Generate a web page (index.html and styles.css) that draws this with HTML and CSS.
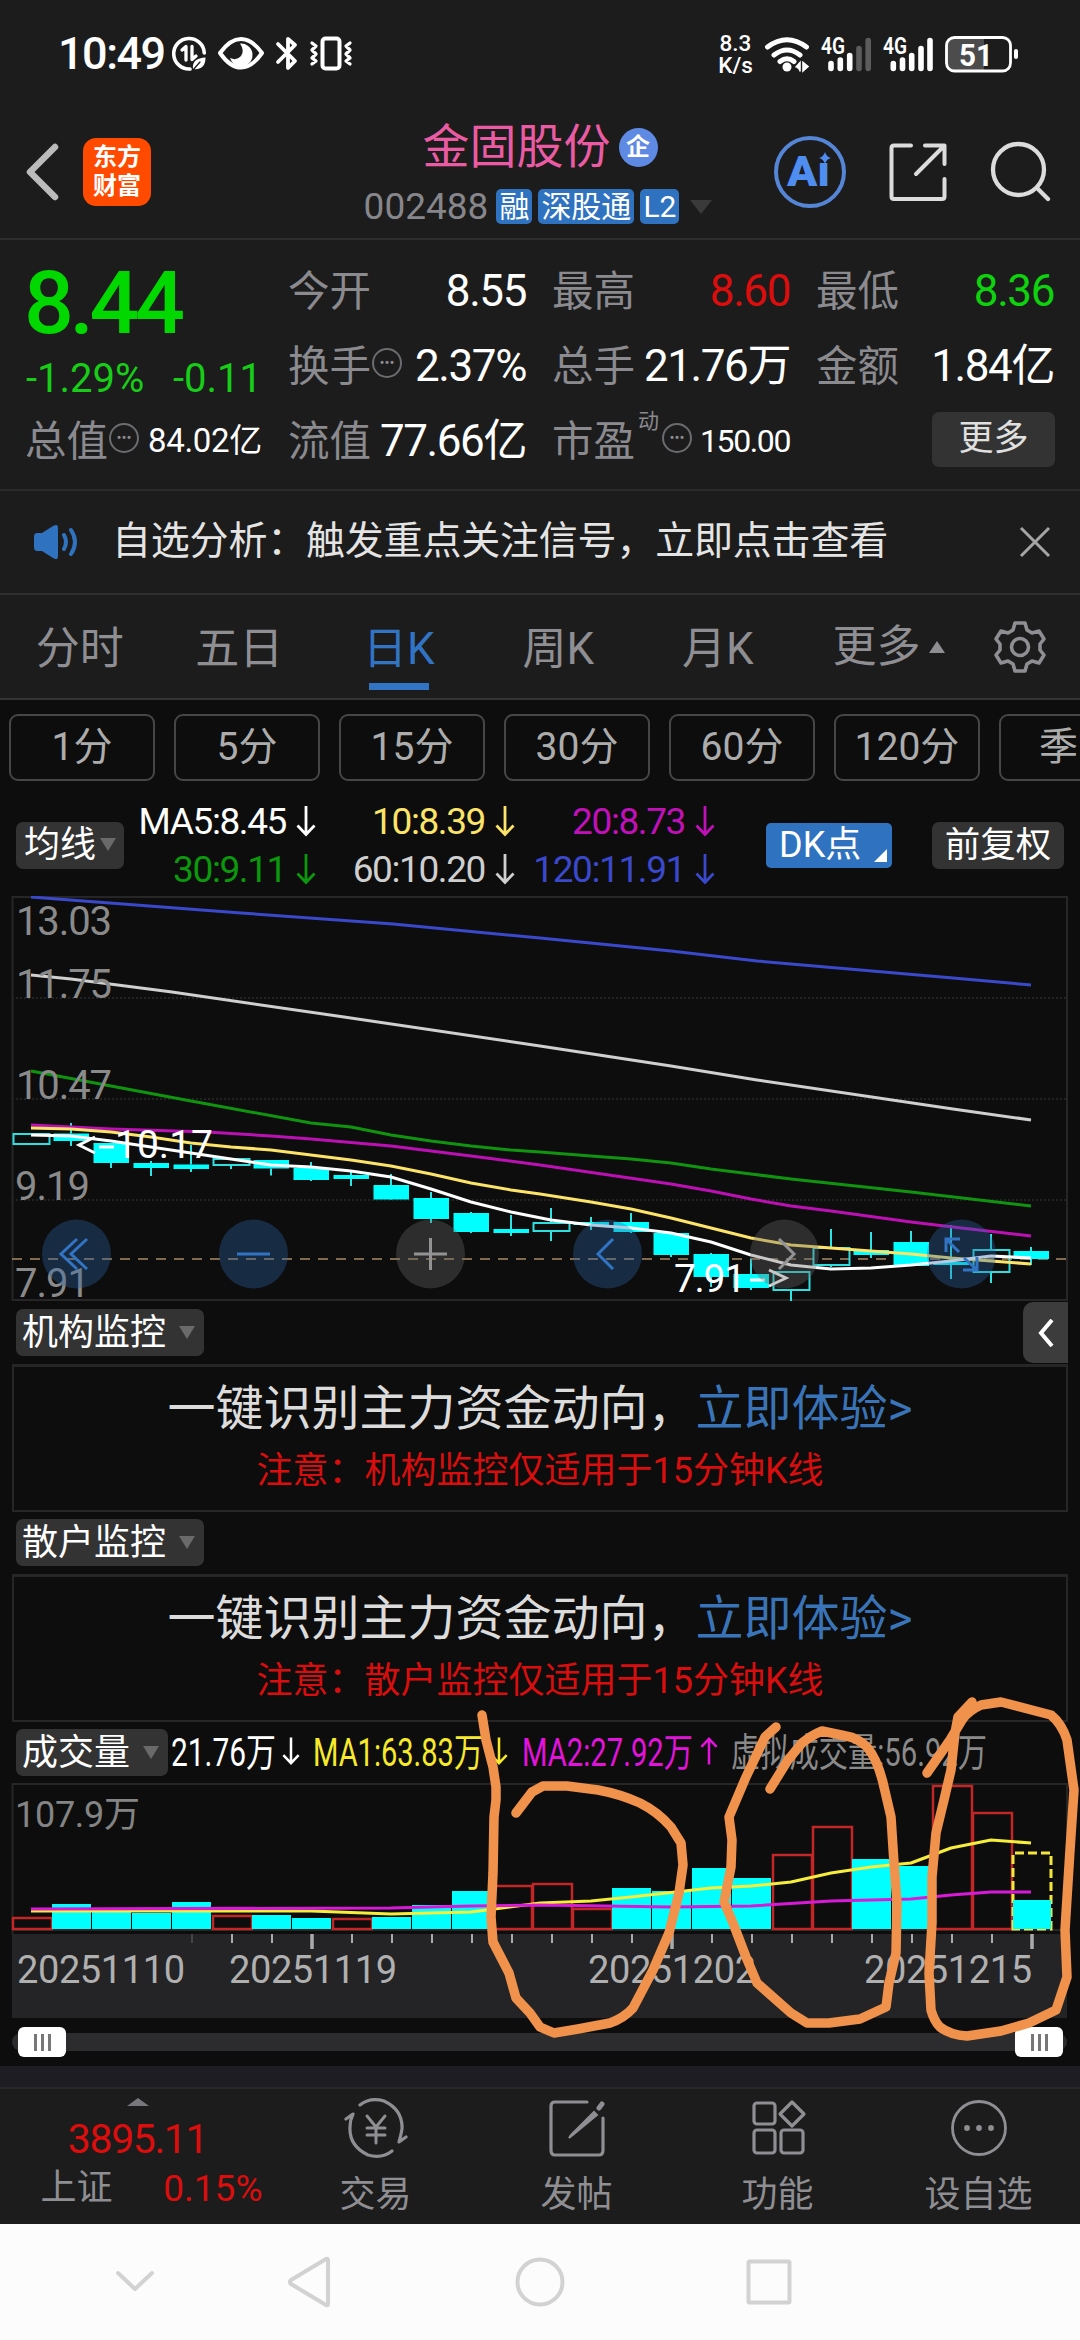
FILE: index.html
```html
<!DOCTYPE html>
<html lang="zh-CN">
<head>
  <meta charset="UTF-8" />
  <meta name="viewport" content="width=device-width, initial-scale=1.0" />
  <title>金固股份 002488</title>
  <link rel="stylesheet" href="styles.css">
</head>
<body>
  <!-- Status bar -->
  <div class="status">
    <span class="time">10:49</span>
    <svg class="status-left" width="184" height="40" viewBox="170 33 184 40" fill="none" stroke="#fff" stroke-width="4" stroke-linecap="round" stroke-linejoin="round">
      <path d="M190 69A15.3 15.3 0 1 1 204.300 53" stroke-width="3.600"/>
      <path d="M182 50L186 46.500V60M192 46.500V59.500L196 56" stroke-width="3.300"/>
      <path d="M193 69C192 61 197 58 205.500 57.500C205.500 65 202 70 193 69Z" fill="#fff" stroke="none"/>
      <path d="M193 70L200 62" stroke="#1c1c1c" stroke-width="1.300"/>
      <path d="M220 53Q230 39 241 39T262 53Q252 67.500 241 67.500T220 53Z"/>
      <path d="M240 43.500A11.500 11.500 0 1 1 230 58Q237 61 241 56T240 43.500Z" fill="#fff" stroke="none"/>
      <path d="M278 44L295 61L288 68V39L295 45L278 62" stroke-width="3.800"/>
      <rect x="322.500" y="38.500" width="17" height="30" rx="3"/>
      <path d="M312 43L316 46L312 50L316 54L312 58L316 61L312 64M350 43L346 46L350 50L346 54L350 58L346 61L350 64" stroke-width="3.300"/>
    </svg>
    <div class="net"><span>8.3</span><span>K/s</span></div>
    <svg width="256" height="42" viewBox="764 32 256 42" fill="none" stroke="#fff" stroke-width="5" stroke-linecap="round">
      <path d="M767.500 46Q787 31.500 806.500 46M774 54Q787 44 800 54M780 60.500Q787 55 794 60.500"/>
      <circle cx="787" cy="66" r="4.500" fill="#fff" stroke="none"/>
      <path d="M796 66L800 61.500V70M803 61.500V70L808 65.500Z" stroke-width="1.600" fill="#fff"/>
      <path d="M831 62.500V67.500M840.300 59V67.500M849.700 54.500V67.500" stroke-width="5.600"/>
      <path d="M859 47.500V67.500M868.200 39.500V67.500" stroke="#5c5c5c" stroke-width="5.600"/>
      <path d="M893.300 62.500V67.500M902.500 59V67.500M911.700 54.500V67.500M921 47.500V67.500M930 39.500V67.500" stroke-width="5.600"/>
      <text class="g4" x="821" y="53" textLength="24" lengthAdjust="spacingAndGlyphs">4G</text>
      <text class="g4" x="883" y="53" textLength="24" lengthAdjust="spacingAndGlyphs">4G</text>
      <path d="M953 37H984V69H953Q947 69 947 63V43Q947 37 953 37Z" fill="#4c4c4c" stroke="none"/>
      <rect x="946.500" y="36.500" width="64" height="33.500" rx="8" stroke-width="2.800"/>
      <path d="M1016 50V56" stroke-width="4"/>
      <text class="batt" x="959" y="64.500" textLength="34" lengthAdjust="spacingAndGlyphs">51</text>
    </svg>
  </div>

  <!-- Header -->
  <header>
    <div class="head-left">
      <svg width="34" height="60" viewBox="0 0 34 60" fill="none" stroke="#bbb" stroke-width="6.500" stroke-linejoin="round"><path d="M30 5L5 30L30 55" stroke-linecap="round"/></svg>
      <div class="logo"><span>东方</span><span>财富</span></div>
    </div>
    <div class="head-mid">
      <div class="name"><span>金固股份</span><i class="qi">企</i></div>
      <div class="code"><span>002488</span><b>融</b><b>深股通</b><b>L2</b><svg width="24" height="16" viewBox="0 0 24 16"><path d="M1 1H23L12 15Z" fill="#3a3a3a"/></svg></div>
    </div>
    <div class="head-right">
      <svg width="74" height="74" viewBox="0 0 74 74">
        <circle cx="37" cy="37" r="34" fill="none" stroke="#5585d6" stroke-width="4"/>
        <text class="ai" x="14" y="51" textLength="43" lengthAdjust="spacingAndGlyphs">Aı</text>
        <path d="M52 17Q53.500 22 58 23Q53.500 24 52 29Q50.500 24 46 23Q50.500 22 52 17Z" fill="#4f8df0"/>
      </svg>
      <svg width="60" height="60" viewBox="0 0 60 60" fill="none" stroke="#dcdcdc" stroke-width="4" stroke-linecap="round" stroke-linejoin="round"><path d="M23 3.500H6Q3.500 3.500 3.500 6V54.500Q3.500 57 6 57H54Q56.500 57 56.500 54.500V37M37 3.500H56.500V22M56.500 3.500L28 32"/></svg>
      <svg width="62" height="62" viewBox="0 0 62 62" fill="none" stroke="#dcdcdc" stroke-width="4.300" stroke-linecap="round"><circle cx="29.500" cy="28.500" r="25.500"/><path d="M48 47L59 58"/></svg>
    </div>
  </header>

  <!-- Quote -->
  <section class="quote">
    <div class="price">
      <div class="now">8.44</div>
      <div class="chg"><span>-1.29%</span><span>-0.11</span></div>
    </div>
    <div class="cell"><label>今开</label><em>8.55</em></div>
    <div class="cell"><label>最高</label><em class="up">8.60</em></div>
    <div class="cell"><label>最低</label><em class="down">8.36</em></div>
    <div class="cell"><label>换手</label><i class="dots">•••</i><em>2.37%</em></div>
    <div class="cell"><label>总手</label><em>21.76万</em></div>
    <div class="cell"><label>金额</label><em>1.84亿</em></div>
    <div class="cell first"><label>总值</label><i class="dots">•••</i><em class="sm">84.02亿</em></div>
    <div class="cell"><label>流值</label><em>77.66亿</em></div>
    <div class="cell"><label>市盈</label><sup>动</sup><i class="dots">•••</i><em class="sm tight">150.00</em></div>
    <div class="cell"><button class="more">更多</button></div>
  </section>

  <!-- Notice -->
  <div class="notice">
    <svg width="46" height="38" viewBox="0 0 46 38" fill="none" stroke="#2f72c0" stroke-width="4" stroke-linecap="round"><path d="M4 10H9L20 3Q25 0 25 5V33Q25 38 20 35L9 28H4Q1 28 1 24V14Q1 10 4 10Z" fill="#2f72c0" stroke="none"/><path d="M31 12Q35 19 31 26M38 7Q46 19 38 31"/></svg>
    <span>自选分析：触发重点关注信号，立即点击查看</span>
    <svg width="32" height="32" viewBox="0 0 32 32" stroke="#a5a5a5" stroke-width="3"><path d="M2 2L30 30M30 2L2 30"/></svg>
  </div>

  <!-- Tabs -->
  <nav class="tabs">
    <a>分时</a><a>五日</a><a class="on">日K</a><a>周K</a><a>月K</a>
    <a class="tab-more">更多<svg width="16" height="14" viewBox="0 0 16 14"><path d="M0 13H16L8 1Z" fill="#8e8e93"/></svg></a>
    <svg class="gear" width="54" height="54" viewBox="0 0 54 54" fill="none" stroke="#8e8e93" stroke-width="3.600" stroke-linejoin="round"><path d="M22 3H32L34 10L39 13L46 11L51 19L47 24V30L51 35L46 43L39 41L34 44L32 51H22L20 44L15 41L8 43L3 35L7 30V24L3 19L8 11L15 13L20 10Z"/><circle cx="27" cy="27" r="8.500"/></svg>
  </nav>

  <div class="periods">
    <span>1分</span><span>5分</span><span>15分</span><span>30分</span><span>60分</span><span>120分</span><span>季</span>
  </div>

  <!-- Moving averages -->
  <div class="ma">
    <button class="pick">均线<svg width="16" height="14" viewBox="0 0 16 14"><path d="M0 0H16L8 13Z" fill="#6a6a6a"/></svg></button>
    <div class="ma-grid">
      <span class="c5">MA5:8.45<svg class="arr"><use href="#down"/></svg></span>
      <span class="c10">10:8.39<svg class="arr"><use href="#down"/></svg></span>
      <span class="c20">20:8.73<svg class="arr"><use href="#down"/></svg></span>
      <span class="c30">30:9.11<svg class="arr"><use href="#down"/></svg></span>
      <span class="c60">60:10.20<svg class="arr"><use href="#down"/></svg></span>
      <span class="c120">120:11.91<svg class="arr"><use href="#down"/></svg></span>
    </div>
    <button class="dk">DK点<svg width="13" height="13" viewBox="0 0 13 13"><path d="M13 0V13H0Z" fill="#fff"/></svg></button>
    <button class="fq">前复权</button>
  </div>

  <!-- K line -->
  <svg class="kline" width="1080" height="406" viewBox="0 896 1080 406">
    <defs>
      <symbol id="down" viewBox="0 0 20 32"><path d="M10 1V29M1.500 20.500L10 29.500L18.500 20.500" fill="none" stroke="currentColor" stroke-width="2.800"/></symbol>
    </defs>
    <path d="M12 998H1067M12 1099H1067M12 1200H1067" stroke="#2b2b2b" stroke-width="1.500" stroke-dasharray="2 2"/>
    <rect x="12.500" y="897" width="1054.500" height="403" fill="none" stroke="#262626" stroke-width="2"/>
    <path d="M12 1259H1067" stroke="#a88a66" stroke-width="1.600" stroke-dasharray="10 8"/>
    <g id="candles"></g>
    <g class="lines">
      <polyline stroke="#3a49cc" points="31,897 241,913 393,924 540,938 671,951 757,961 953,978 1031,985"/>
      <polyline stroke="#cfcfcf" points="31,975 71,979 172,992 344,1017 540,1046 671,1066 757,1080 953,1109 1031,1120"/>
      <polyline stroke="#109410" points="31,1071 111,1086 191,1101 311,1123 351,1127 391,1135 431,1141 471,1146 511,1150 540,1152 591,1156 631,1159 671,1163 711,1169 751,1174 791,1179 911,1192 1031,1206"/>
      <polyline stroke="#bc10b4" points="31,1125 71,1127 111,1129 207,1132 271,1136 311,1139 391,1146 471,1156 540,1165 671,1184 711,1191 751,1199 791,1206 831,1211 911,1222 953,1227 1031,1236"/>
      <polyline stroke="#fbe468" points="31,1128 71,1129 111,1132 151,1137 191,1143 231,1147 271,1150 311,1155 351,1160 391,1166 431,1174 471,1183 511,1190 540,1194 591,1202 631,1209 671,1218 711,1228 751,1238 791,1245 831,1248 871,1251 911,1254 951,1258 991,1261 1031,1264"/>
      <polyline stroke="#fff" points="31,1135 71,1136 111,1141 151,1147 191,1153 231,1159 271,1165 311,1167 351,1171 391,1177 431,1189 471,1202 511,1212 551,1220 591,1225 631,1228 671,1233 711,1242 751,1255 791,1265 831,1269 871,1268 911,1265 951,1261 991,1256 1031,1258"/>
    </g>
    <g class="axis">
      <text x="16" y="935" textLength="96">13.03</text>
      <text x="16" y="998" textLength="96">11.75</text>
      <text x="16" y="1099" textLength="96">10.47</text>
      <text x="15" y="1200" textLength="75">9.19</text>
      <text x="15" y="1297" textLength="75">7.91</text>
    </g>
    <g class="mark">
      <text x="115" y="1158" textLength="98">10.17</text>
      <path d="M95 1137L79 1145L95 1153M99 1147H114"/>
      <text x="674" y="1292" textLength="72">7.91</text>
      <path d="M769 1270L786 1278L769 1286M750 1280H765"/>
    </g>
    <g class="ctl">
      <circle cx="76.500" cy="1254" r="34.500" class="blue"/><path class="blue-i" d="M77 1239L61 1254L77 1269M87 1239L71 1254L87 1269"/>
      <circle cx="253.500" cy="1254" r="34.500" class="blue"/><path class="blue-i" d="M237 1254H270"/>
      <circle cx="430.500" cy="1254" r="34.500" class="grey"/><path class="grey-i" d="M414 1254H447M430.500 1238V1270"/>
      <circle cx="607.500" cy="1254" r="34.500" class="blue"/><path class="blue-i" d="M613 1239L598 1254L613 1269"/>
      <circle cx="784.500" cy="1254" r="34.500" class="grey"/><path class="grey-i" d="M779 1239L794 1254L779 1269"/>
      <circle cx="961.500" cy="1254" r="34.500" class="blue"/><path class="blue-i" d="M960 1239H946V1252M946 1239L959 1252M964 1258L977 1270M977 1257V1270H963"/>
    </g>
  </svg>

  <!-- Monitors -->
  <div class="bar">
    <button class="pick wide">机构监控<svg width="16" height="14" viewBox="0 0 16 14"><path d="M0 0H16L8 13Z" fill="#6a6a6a"/></svg></button>
    <div class="drawer"><svg width="16" height="28" viewBox="0 0 16 28" fill="none" stroke="#fff" stroke-width="4"><path d="M14 1L3 14L14 27"/></svg></div>
  </div>
  <div class="promo">
    <p>一键识别主力资金动向，<a>立即体验&gt;</a></p>
    <small>注意：机构监控仅适用于15分钟K线</small>
  </div>
  <div class="bar">
    <button class="pick wide">散户监控<svg width="16" height="14" viewBox="0 0 16 14"><path d="M0 0H16L8 13Z" fill="#6a6a6a"/></svg></button>
  </div>
  <div class="promo">
    <p>一键识别主力资金动向，<a>立即体验&gt;</a></p>
    <small>注意：散户监控仅适用于15分钟K线</small>
  </div>

  <!-- Volume -->
  <div class="bar vol-bar">
    <button class="pick wide">成交量<svg width="16" height="14" viewBox="0 0 16 14"><path d="M0 0H16L8 13Z" fill="#6a6a6a"/></svg></button>
    <svg class="vol-text" width="830" height="61" viewBox="170 1722 830 61">
      <g fill="#fff" color="#fff"><text x="171" y="1766" textLength="105" lengthAdjust="spacingAndGlyphs">21.76万</text><use href="#down" x="282" y="1734" width="18" height="34"/></g>
      <g fill="#f7ea2a" color="#f7ea2a"><text x="313" y="1766" textLength="170" lengthAdjust="spacingAndGlyphs">MA1:63.83万</text><use href="#down" x="490" y="1734" width="18" height="34"/></g>
      <g fill="#e312dc" color="#e312dc"><text x="522" y="1766" textLength="171" lengthAdjust="spacingAndGlyphs">MA2:27.92万</text><use href="#down" x="-718" y="-1768" width="18" height="34" transform="rotate(180)"/></g>
      <text fill="#8a8a8a" x="731" y="1766" textLength="256" lengthAdjust="spacingAndGlyphs">虚拟成交量:56.92万</text>
    </svg>
  </div>
  <svg class="volume" width="1080" height="236" viewBox="0 1783 1080 236">
    <path d="M12.500 1934V1784H1067V1934M12 1930H1067" fill="none" stroke="#262626" stroke-width="2"/>
    <g id="bars"></g>
    <path d="M1013 1929V1853H1051V1929Z" fill="none" stroke="#f5e63a" stroke-width="3" stroke-dasharray="9 4"/>
    <rect x="1013" y="1900" width="38" height="29" fill="#00ffff"/>
    <g class="lines">
      <polyline stroke="#f7ee3c" points="31,1911 311,1911 391,1914 471,1912 540,1903 591,1901 631,1897 711,1888 751,1886 791,1882 831,1873 871,1867 911,1863 951,1848 991,1840 1031,1843"/>
      <polyline stroke="#d81ad8" points="31,1909 391,1908 471,1906 540,1905 671,1907 751,1906 831,1901 911,1899 951,1895 991,1892 1031,1892"/>
    </g>
    <text class="vmax" x="15" y="1827" textLength="125">107.9万</text>
    <rect x="12" y="1934" width="1055" height="84" fill="#242426"/>
    <g id="ticks"></g>
    <g class="dates">
      <text x="17" y="1983" textLength="168">20251110</text>
      <text x="229" y="1983" textLength="168">20251119</text>
      <text x="588" y="1983" textLength="168">20251202</text>
      <text x="864" y="1983" textLength="168">20251215</text>
    </g>
  </svg>

  <div class="slider">
    <div class="track"><i class="thumb"></i><i class="thumb"></i></div>
  </div>
  <div class="strip"></div>

  <!-- Bottom bar -->
  <footer>
    <div class="index">
      <svg width="22" height="8" viewBox="0 0 22 8"><path d="M0 8H22L11 0Z" fill="#77777c"/></svg>
      <div class="pt">3895.11</div>
      <div class="pct"><span>上证</span><b>0.15%</b></div>
    </div>
    <a><svg width="66" height="62" viewBox="0 0 66 62" fill="none" stroke="#8e8e93" stroke-width="3.200" stroke-linecap="round" stroke-linejoin="round">
      <path d="M17 8Q27 0 41 4Q60 13 59 32Q58 38 56 45L63 40M49 54Q39 62 25 58Q6 49 7 30Q7 23 10 17L3 22"/><path d="M24 19L33 30L42 19M33 30V46M24 31H42M24 38H42" stroke-width="3"/></svg>交易</a>
    <a><svg width="66" height="62" viewBox="0 0 66 62" fill="none" stroke="#8e8e93" stroke-width="3.200" stroke-linecap="round"><path d="M43 5H11Q7 5 7 9V53Q7 58 11 58H55Q59 58 59 53V21"/><path d="M27 38L50 15L53 18L30 37L25 41Z" fill="#8e8e93" stroke-width="2"/><path d="M55 11L58 7" stroke-width="5"/></svg>发帖</a>
    <a><svg width="66" height="62" viewBox="0 0 66 62" fill="none" stroke="#8e8e93" stroke-width="3.200" stroke-linejoin="round"><rect x="9" y="6" width="21" height="21" rx="3"/><rect x="9" y="33" width="21" height="23" rx="3"/><rect x="36" y="33" width="22" height="23" rx="3"/><path d="M47 5L59 17L47 29L35 17Z"/></svg>功能</a>
    <a><svg width="66" height="62" viewBox="0 0 66 62"><circle cx="33" cy="31" r="26.500" fill="none" stroke="#8e8e93" stroke-width="2.800"/><g fill="#8e8e93"><circle cx="21" cy="31" r="2.900"/><circle cx="33" cy="31" r="2.900"/><circle cx="45" cy="31" r="2.900"/></g></svg>设自选</a>
  </footer>

  <div class="sysnav">
    <svg width="1080" height="116" viewBox="0 2224 1080 116" fill="none" stroke="#d2d2d2" stroke-width="4" stroke-linejoin="round" stroke-linecap="round">
      <path d="M118 2273L135 2289L152 2273"/><path d="M328 2260V2304Q328 2306 326 2305L291 2284Q289 2282 291 2280L326 2259Q328 2258 328 2260Z"/><circle cx="540" cy="2282" r="22.500"/><rect x="748.500" y="2261.500" width="41" height="41" rx="1"/>
    </svg>
  </div>

  <!-- Pen marks drawn over the volume chart -->
  <svg class="pen" width="1080" height="360" viewBox="0 1690 1080 360">
    <path d="M482 1715L486 1740L493 1767L496 1787V1800L494 1817L493 1873L491 1917L493 1942L509 1973L516 1998L530 2013L540 2027L554 2033L578 2029L610 2023Q624 2018 633 2008L653 1970L669 1933L679 1893L683 1865L681 1843L671 1827Q658 1812 640 1803Q620 1794 598 1790L567 1786H543L532 1792L516 1813"/>
    <path d="M776 1727L765 1737L746 1777L729 1817L732 1840L731 1867L724 1902L733 1923L746 1957L757 1983L791 2013L807 2023H829L860 2019L886 2007L889 1983L896 1953L897 1903L894 1863L891 1817L884 1787Q878 1760 867 1747Q858 1738 846 1736L822 1731Q812 1735 802 1743L788 1760L770 1789"/>
    <path d="M972 1702L958 1717L955 1733L951 1770L944 1800L936 1833L932 1877V1923L929 1973L931 2010Q934 2021 940 2027Q950 2035 967 2036L1001 2031L1029 2023L1056 2010L1067 1977L1065 1930L1070 1850L1074 1790L1067 1740Q1062 1724 1051 1715L1001 1702L981 1705Q968 1711 962 1720L950 1740L927 1773"/>
  </svg>

  <script>
    // [body top, body bottom, high, low, hollow]
    const candles = [
      [1134,1144,1134,1145,1],[1133.5,1141,1123,1146],[1143,1163,1143,1168],[1163,1168,1161,1176],
      [1164.5,1169,1145,1172],[1159,1165,1159,1169,1],[1160,1168.5,1160,1175.5],[1168,1180,1162,1181],
      [1175,1179,1172,1186],[1185,1199.5,1174,1200],[1198,1219,1192,1223],[1213,1232,1212,1233],
      [1229,1233,1215,1236],[1223,1231,1208,1241,1],[1222,1225,1217,1230],[1222,1232,1213,1233],
      [1233,1255,1233,1257],[1254,1277,1253,1287],[1274,1288,1259,1290],[1272,1290,1272,1301,1],
      [1248,1265,1229,1267,1],[1250,1255,1232,1258],[1242,1266,1231,1266],[1262,1265,1225,1279],
      [1250,1272,1234,1283,1],[1251,1259,1247,1265]
    ];
    document.getElementById('candles').innerHTML = candles.map(([t, b, hi, lo, hollow], i) => {
      const x = 31 + i * 40;
      return `<path d="M${x} ${hi}V${t}M${x} ${b}V${lo}" stroke="#2fe3e3" stroke-width="2"/>` + (hollow
        ? `<rect x="${x - 17.5}" y="${t}" width="36" height="${b - t}" fill="none" stroke="#2fdede" stroke-width="2"/>`
        : `<rect x="${x - 17.5}" y="${t}" width="35.5" height="${b - t}" fill="#00ffff"/>`);
    }).join('');

    // volume: [top, rising]
    const vols = [
      [1917,1],[1904],[1910],[1913],[1902],[1915,1],[1915],[1918],[1918,1],[1917],[1905],[1891],
      [1885,1],[1883,1],[1908,1],[1888],[1891],[1868],[1878],[1854,1],[1826,1],[1859],[1866],[1785,1],[1812,1]
    ];
    document.getElementById('bars').innerHTML = vols.map(([t, up], i) => {
      const x = 12 + i * 40;
      return up
        ? `<rect x="${x + 1}" y="${t + 1}" width="39" height="${1928 - t}" fill="none" stroke="#c22626" stroke-width="2.5"/>`
        : `<rect x="${x}" y="${t}" width="39" height="${1929 - t}" fill="#00ffff"/>`;
    }).join('');

    let ticks = '';
    for (let x = 192; x <= 1032; x += 40) {
      const big = x === 312 || x === 672 || x === 1032;
      ticks += `<path d="M${x} 1934V${big ? 1949 : 1943}" stroke="${x === 192 ? '#444' : '#aaa'}" stroke-width="${big ? 3.5 : 2}"/>`;
    }
    document.getElementById('ticks').innerHTML = ticks;
  </script>
</body>
</html>
```
FILE: styles.css
```css
* { box-sizing: border-box; }
body { margin: 0; width: 1080px; height: 2340px; overflow: hidden; position: relative; background: #0d0d0d; color: #fff; font-family: Roboto, "Noto Sans CJK SC", sans-serif; }
svg { display: block; flex: none; }
i, em { font-style: normal; }
button { border: none; color: #fff; font-family: inherit; padding: 0; }

/* Status bar */
.status { height: 110px; background: #1c1c1c; display: flex; align-items: flex-start; padding: 33px 60px 0 58px; }
.time { width: 112px; font-size: 45px; line-height: 42px; font-weight: 500; letter-spacing: -1.5px; }
.status-left { margin-right: auto; }
.net { width: 48px; padding-right: 9px; text-align: center; font-size: 22.5px; line-height: 22px; font-weight: 500; display: flex; flex-direction: column; margin-top: -1px; }
.g4 { font-size: 23px; font-weight: 600; fill: #fff; stroke: none; }
.batt { font-size: 32px; font-weight: 700; fill: #fff; stroke: none; }

/* Header */
header { height: 130px; background: #1c1c1c; border-bottom: 2px solid #2d2d2d; display: flex; }
.head-left, .head-right { width: 320px; height: 124px; display: flex; align-items: center; }
.head-left { padding-left: 25px; gap: 24px; }
.head-right { justify-content: flex-end; gap: 41px; padding-right: 29px; }
.logo { width: 68px; height: 68px; border-radius: 13px; background: #ff4a00; display: flex; flex-direction: column; align-items: center; justify-content: center; font-weight: 700; font-size: 24px; line-height: 29px; }
.head-mid { flex: 1; padding-top: 12px; display: flex; flex-direction: column; align-items: center; }
.name { display: flex; align-items: center; gap: 8px; font-size: 47px; line-height: 50px; color: #ea5ba3; }
.qi { width: 39px; height: 39px; border-radius: 50%; background: #5f8ae4; color: #fff; font-size: 24px; line-height: 38px; font-weight: 700; text-align: center; }
.code { display: flex; align-items: center; margin-top: 17px; height: 35px; font-size: 37px; color: #86868b; padding-right: 3px; }
.code span { margin-right: 8px; }
.code b { height: 35px; line-height: 35px; padding: 0 3px; margin-right: 6px; border-radius: 5px; background: #2f72c0; color: #fff; font-weight: 400; font-size: 30px; }
.code svg { margin-left: 4px; }
.ai { font-size: 42px; font-weight: 900; fill: #4f8df0; }

/* Quote */
.quote { height: 249px; background: #1c1c1c; padding: 12px 25px 0 27px; display: grid; grid-template-columns: 235px 238px 238px 238px; grid-auto-rows: 75px; column-gap: 26px; }
.price { grid-row: span 2; color: #00d800; }
.now { font-size: 88px; line-height: 101px; font-weight: 500; letter-spacing: -4.5px; margin-left: -3px; }
.chg { display: flex; justify-content: space-between; font-size: 40px; line-height: 51px; color: #17cd17; margin-left: -1px; }
.cell { display: flex; align-items: center; white-space: nowrap; }
.cell label { font-size: 41.5px; line-height: 60px; color: #8a8a8f; padding-top: 4px; }
.cell.first label { margin-left: -2px; }
.cell em { margin-left: auto; font-size: 44px; line-height: 60px; letter-spacing: -1.4px; padding-top: 3px; }
.cell em.up { color: #dc0d0d; }
.cell em.down { color: #0fd20f; }
.cell em.sm { font-size: 33px; letter-spacing: -.3px; }
.cell em.tight { font-size: 32px; letter-spacing: -1.4px; }
.cell sup { font-size: 21px; line-height: 22px; color: #8a8a8f; align-self: flex-start; margin: 8px 2px 0 3px; }
.dots { width: 30px; height: 30px; margin: 0 0 4px 1px; border: 2px solid #6c6c70; border-radius: 50%; color: #8a8a8f; font-size: 15px; line-height: 26px; text-align: center; letter-spacing: 0; }
.more { margin: 0 -1px 0 auto; width: 123px; height: 55px; border-radius: 7px; background: #333; color: #e0e0e0; font-size: 35px; line-height: 50px; padding-bottom: 2px; }

/* Notice */
.notice { height: 106px; background: #1c1c1c; border-top: 2px solid #2a2a2a; border-bottom: 2px solid #2f2f2f; display: flex; align-items: center; padding: 0 29px 0 33px; }
.notice span { margin: 0 auto 0 33px; padding-bottom: 11px; font-size: 39px; letter-spacing: -.2px; color: #e4e4e4; }

/* Tabs */
.tabs { height: 105px; background: #1c1c1c; border-bottom: 2px solid #333; display: flex; align-items: center; font-size: 44px; color: #8e8e93; }
.tabs a { width: 159.500px; height: 103px; line-height: 108px; text-align: center; white-space: nowrap; }
.tabs .on { color: #3274c4; background: linear-gradient(#3274c4, #3274c4) center bottom 8px / 60px 7px no-repeat; }
.tabs .tab-more { width: 113px; margin-left: 35px; display: flex; align-items: center; gap: 8px; }
.gear { margin-left: 47px; }

.periods { height: 82px; padding: 14px 0 0 9px; display: flex; gap: 19px; overflow: hidden; }
.periods span { flex: none; width: 146px; height: 67px; border: 2px solid #464646; border-radius: 9px; text-align: center; font-size: 39px; line-height: 63px; color: #acacac; }
.periods span:last-child { padding-left: 0; text-align: left; text-indent: 38px; }

/* Moving averages */
.ma { height: 114px; padding: 0 16px; display: flex; align-items: center; }
.pick { height: 47px; width: 108px; border-radius: 7px; background: #333; font-size: 36px; line-height: 44px; display: flex; align-items: center; justify-content: space-between; padding: 0 8px; flex: none; }
.ma > button { position: relative; top: 6px; }
.ma-grid { width: 591px; display: grid; grid-template-columns: 192px 199px 200px; grid-auto-rows: 48px; padding-top: 12px; }
.ma-grid span { display: flex; align-items: center; justify-content: flex-end; gap: 10px; font-size: 37px; letter-spacing: -1.4px; white-space: nowrap; }
.arr { width: 20px; height: 32px; }
.c5 { color: #fff; }
.c10 { color: #fbe468; }
.c20 { color: #c010b8; }
.c30 { color: #0c980c; }
.c60 { color: #cfcfcf; }
.c120 { color: #3a49cc; }
.dk { width: 126px; height: 45px; margin-left: 51px; border-radius: 5px; background: #2f72c0; font-size: 36px; line-height: 43px; text-align: left; padding-left: 13px; }
.dk svg { position: absolute; right: 5px; bottom: 6px; }
.fq { width: 132px; height: 47px; margin-left: 40px; border-radius: 7px; background: #333; font-size: 35.5px; line-height: 44px; }

/* Charts */
.lines polyline { fill: none; stroke-width: 3; stroke-linejoin: round; }
.axis text { font-size: 40px; fill: #8a8a8a; }
.mark text { font-size: 39px; fill: #fff; }
.mark path { fill: none; stroke: #fff; stroke-width: 3; }
.blue { fill: rgba(44, 101, 170, .35); }
.grey { fill: rgba(102, 102, 102, .36); }
.blue-i, .grey-i { fill: none; stroke: #3274c4; stroke-width: 3; }
.grey-i { stroke: #939396; }
.vmax { font-size: 36px; fill: #848484; }
.dates text { font-size: 38px; fill: #b0b0b0; }

/* Monitor rows */
.bar { height: 62px; padding: 7px 12px 0 16px; display: flex; }
.bar .wide { width: auto; padding: 0 9px 0 6px; gap: 13px; }
.drawer { width: 45px; height: 61px; margin: -7px 0 0 auto; border-radius: 10px 0 0 10px; background: #3c3c3c; display: flex; align-items: center; padding-left: 15px; }
.promo { height: 148px; margin: 0 12px; border: 2px solid #262626; border-top-width: 3px; text-align: center; padding-top: 12px; }
.promo p { margin: 0; font-size: 48px; line-height: 60px; color: #dcdcdc; }
.promo a { color: #3a74b8; }
.promo small { display: block; font-size: 36px; line-height: 64px; color: #d90d0d; }
.vol-bar { height: 61px; }
.vol-text { margin: -7px 0 0 2px; font-size: 39px; }

.slider { height: 47px; padding: 14px 13px 0 12px; }
.track { height: 18px; border-radius: 9px; background: #2c2c2e; display: flex; justify-content: space-between; align-items: center; padding: 0 4px 0 6px; }
.thumb { width: 48px; height: 30px; border-radius: 6px; background: linear-gradient(90deg, #777 3px, #fff 3px 7px, #777 7px 10px, #fff 10px 14px, #777 14px) center / 17px 17px no-repeat #fff; }
.strip { height: 23px; background: #1e1d23; border-bottom: 2px solid #28282b; }

/* Footer */
footer { height: 135px; background: #1c1c1c; display: flex; }
footer a { width: 201px; display: flex; flex-direction: column; align-items: center; padding-top: 8px; font-size: 36px; line-height: 72px; color: #8e8e93; }
.index { width: 275px; display: flex; flex-direction: column; align-items: center; padding-top: 9px; color: #dc0d0d; }
.pt { font-size: 41px; line-height: 66px; letter-spacing: -1.4px; }
.pct { width: 222px; margin-left: 28px; display: flex; justify-content: space-between; font-size: 37px; line-height: 33px; }
.pct span { font-size: 36px; color: #8e8e93; }
.pct b { font-weight: 400; }
.sysnav { height: 116px; background: #fcfcfc; }

.pen { position: absolute; left: 0; top: 1690px; fill: none; stroke: #f0924b; stroke-width: 9.5; stroke-linejoin: round; stroke-linecap: round; }
```
